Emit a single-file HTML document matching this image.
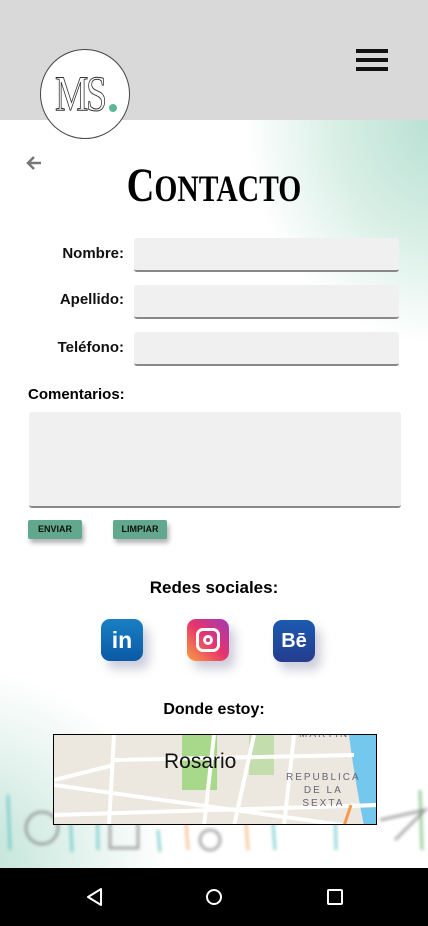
<!DOCTYPE html>
<html><head><meta charset="utf-8"><style>
*{margin:0;padding:0;box-sizing:border-box}
body{width:428px;height:926px;position:relative;overflow:hidden;background:#fff;font-family:"Liberation Sans",Arial,sans-serif}
.abs{position:absolute}
.top{left:0;top:0;width:428px;height:120px;background:#d9d9d9}
.grad1{left:0;top:120px;width:428px;height:340px;background:radial-gradient(ellipse 260px 300px at 440px 0px,#b7e0d2 0%,#d8efe6 40%,rgba(255,255,255,0) 75%)}
.grad2{left:0;top:640px;width:428px;height:228px;background:radial-gradient(ellipse 260px 250px at -40px 228px,#b9e0d2 0%,#e2f2ec 45%,rgba(255,255,255,0) 80%)}
.lbl{font-weight:bold;font-size:15px;color:#111;text-align:right;width:124px;left:0}
.inp{left:134px;width:265px;height:34px;background:#f0f0f0;border-radius:3px;border-bottom:2px solid #888}
.btn{height:19px;background:#62a88e;font-size:9px;font-weight:bold;color:#111;text-align:center;line-height:19px;border-radius:2px;box-shadow:2px 4px 5px rgba(0,0,0,.3)}
.ic{width:42px;height:42px;border-radius:9px;box-shadow:6px 8px 10px rgba(60,60,110,.25);color:#fff;font-weight:bold;text-align:center}
</style></head><body>
<div class="abs top"></div>
<div class="abs grad1"></div>
<div class="abs grad2"></div>
<!-- doodles -->
<svg class="abs" style="left:0;top:790px;filter:blur(1.5px)" width="428" height="78">
<g stroke-width="3" opacity=".6">
<line x1="8" y1="5" x2="10" y2="60" stroke="#4bbcc0"/><line x1="70" y1="20" x2="72" y2="62" stroke="#4bbcc0"/><line x1="97" y1="5" x2="98" y2="60" stroke="#4bbcc0"/><line x1="158" y1="40" x2="160" y2="62" stroke="#4bbcc0"/><line x1="185" y1="18" x2="188" y2="60" stroke="#f4a460"/><line x1="245" y1="20" x2="248" y2="60" stroke="#f4a460"/><line x1="272" y1="20" x2="275" y2="60" stroke="#4bbcc0"/><line x1="335" y1="20" x2="336" y2="60" stroke="#4bbcc0"/><line x1="420" y1="0" x2="422" y2="60" stroke="#5ab060"/></g>
<g stroke="#777" fill="none" stroke-width="3" opacity=".6"><circle cx="42" cy="38" r="16"/><rect x="110" y="28" width="28" height="30"/><path d="M380 30 L425 20 L395 50"/><circle cx="210" cy="50" r="10"/></g>
</svg>
<!-- logo -->
<div class="abs" style="left:40px;top:49px;width:90px;height:90px;border-radius:50%;border:1px solid #444;background:#fff"></div>
<div class="abs" style="left:55px;top:68px;font-family:'Liberation Serif',serif;font-size:50px;line-height:50px;color:#fff;-webkit-text-stroke:1px #333;letter-spacing:-3px;transform:scaleX(.75);transform-origin:left">MS</div>
<div class="abs" style="left:109px;top:104px;width:8px;height:8px;border-radius:50%;background:#5bb895"></div>
<!-- hamburger -->
<div class="abs" style="left:356px;top:49px;width:32px;height:4px;background:#111"></div>
<div class="abs" style="left:356px;top:58px;width:32px;height:4px;background:#111"></div>
<div class="abs" style="left:356px;top:67px;width:32px;height:4px;background:#111"></div>
<!-- back arrow -->
<svg class="abs" style="left:24px;top:153px" width="20" height="20"><path d="M17 10H4M10 4L4 10L10 16" stroke="#777" stroke-width="2.5" fill="none"/></svg>
<div class="abs" style="left:0;width:428px;top:158px;text-align:center;font-family:'Liberation Serif',serif;font-weight:bold;font-size:48px;transform:scaleX(.8)"><span>C</span><span style="font-size:37px">ONTACTO</span></div>
<div class="abs lbl" style="top:245px">Nombre:</div>
<div class="abs inp" style="top:238px"></div>
<div class="abs lbl" style="top:291px">Apellido:</div>
<div class="abs inp" style="top:285px"></div>
<div class="abs lbl" style="top:339px">Teléfono:</div>
<div class="abs inp" style="top:332px"></div>
<div class="abs" style="left:28px;top:386px;font-weight:bold;font-size:15px">Comentarios:</div>
<div class="abs" style="left:29px;top:412px;width:372px;height:96px;background:#f0f0f0;border-radius:3px;border-bottom:2px solid #888"></div>
<div class="abs btn" style="left:28px;top:520px;width:54px">ENVIAR</div>
<div class="abs btn" style="left:113px;top:520px;width:54px">LIMPIAR</div>
<div class="abs" style="left:0;width:428px;text-align:center;top:578px;font-weight:bold;font-size:17px">Redes sociales:</div>
<div class="abs ic" style="left:101px;top:619px;background:linear-gradient(#1a7fc3,#0a5aa5);font-size:23px;line-height:42px">in</div>
<div class="abs ic" style="left:187px;top:619px;background:linear-gradient(45deg,#f9a040,#e7346c 50%,#a03bb6);"><div style="position:absolute;left:9px;top:9px;width:24px;height:24px;border:3px solid #fff;border-radius:7px"></div><div style="position:absolute;left:16px;top:16px;width:10px;height:10px;border:3px solid #fff;border-radius:50%"></div></div>
<div class="abs ic" style="left:273px;top:620px;background:linear-gradient(#1c5ab0,#243c8f);font-size:20px;line-height:42px">Bē</div>
<div class="abs" style="left:0;width:428px;text-align:center;top:701px;font-weight:bold;font-size:16px">Donde estoy:</div>
<!-- map -->
<div class="abs" style="left:53px;top:734px;width:324px;height:91px;border:1px solid #000;background:#ece7df;overflow:hidden">
<svg width="324" height="91" style="position:absolute;left:0;top:0">
<rect x="128" y="0" width="35" height="55" fill="#a8d98a"/>
<rect x="195" y="0" width="25" height="40" fill="#a8d98a" opacity=".6"/>
<path d="M295 0 H324 V91 H310 Q300 40 295 0Z" fill="#74c8ee"/>
<g stroke="#fff" stroke-width="4"><line x1="0" y1="45" x2="60" y2="30"/><line x1="0" y1="50" x2="324" y2="95"/><line x1="60" y1="0" x2="55" y2="91"/><line x1="160" y1="0" x2="150" y2="91"/><line x1="0" y1="80" x2="324" y2="70"/><line x1="200" y1="0" x2="180" y2="91"/><line x1="60" y1="25" x2="300" y2="20"/><line x1="240" y1="0" x2="230" y2="91"/></g>
<path d="M297 70 L290 91" stroke="#f59a4a" stroke-width="3"/>
</svg>
<div style="position:absolute;left:110px;top:15px;font-size:21px;color:#111">Rosario</div>
<div style="position:absolute;left:232px;top:36px;font-size:10px;color:#667;letter-spacing:2px;text-align:center;line-height:13px">REPUBLICA<br>DE LA<br>SEXTA</div>
<div style="position:absolute;left:245px;top:-6px;font-size:10px;color:#667;letter-spacing:2px">MARTIN</div>
</div>
<!-- nav -->
<div class="abs" style="left:0;top:868px;width:428px;height:58px;background:#000"></div>
<svg class="abs" style="left:0;top:868px" width="428" height="58">
<path d="M101 21 L88 29 L101 37Z" stroke="#fff" stroke-width="2" fill="none" stroke-linejoin="round"/>
<circle cx="214" cy="29" r="7" stroke="#fff" stroke-width="2" fill="none"/>
<rect x="328" y="22" width="14" height="14" rx="1" stroke="#fff" stroke-width="2" fill="none"/>
</svg>
</body></html>
